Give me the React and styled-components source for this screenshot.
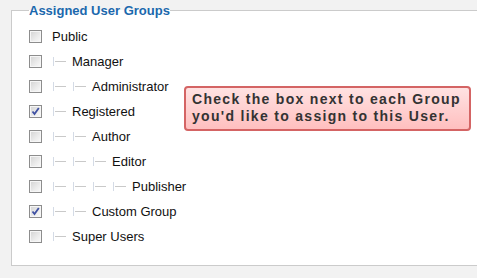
import styled, { createGlobalStyle } from "styled-components";

const Global = createGlobalStyle`
  html, body {
    margin: 0;
    padding: 0;
    overflow: hidden;
    background: #f2f2f2;
    font-family: "Liberation Sans", Arial, sans-serif;
  }
`;

const Page = styled.div`
  padding: 3px 0 0 11px;
  width: 480px;
`;

const Fieldset = styled.fieldset`
  margin: 0;
  padding: 6px 0 16px 17px;
  border: 1px solid #cbcbcb;
  background: #fff;
  min-width: 0;
`;

const Legend = styled.legend`
  padding: 0;
  font-size: 13px;
  line-height: 15px;
  font-weight: bold;
  color: #1b68ad;
`;

const Body = styled.div`
  position: relative;
`;

const List = styled.ul`
  list-style: none;
  margin: 0;
  padding: 0;
`;

const Row = styled.li`
  display: flex;
  align-items: center;
  height: 25px;
  font-size: 13px;
  color: #111;
`;

const Box = styled.span`
  width: 11px;
  height: 11px;
  border: 1px solid #8d8d8d;
  background: linear-gradient(135deg, #d3d3d3 0%, #ececec 60%, #fafafa 100%);
  box-shadow: inset 0 0 0 1px #f6f6f6;
  display: flex;
  align-items: center;
  justify-content: center;
  margin-right: 10px;
  flex: none;
`;

const Indent = styled.span`
  display: inline-block;
  width: 20px;
  height: 10px;
  flex: none;
  background:
    linear-gradient(#d4dbe6, #d4dbe6) 1px 0 / 1px 9px no-repeat,
    linear-gradient(#c9c9c9, #c9c9c9) 3px 4px / 11px 1px no-repeat;
`;

const Callout = styled.div`
  position: absolute;
  left: 155px;
  top: 62px;
  width: 271px;
  padding: 3px 6px 4px 6px;
  border: 2px solid #d46464;
  border-radius: 4px;
  background: linear-gradient(#ffe2e2, #ffbfbf);
  color: #333;
  font-size: 14px;
  font-weight: bold;
  letter-spacing: 1.3px;
  line-height: 17px;
`;

const Check = () => (
  <svg width="9" height="9" viewBox="0 0 9 9">
    <path d="M1.5 4.5 L3.5 7 L7.8 1" fill="none" stroke="#3f51a3" strokeWidth="1.8" />
  </svg>
);

const groups = [
  { name: "Public", level: 0 },
  { name: "Manager", level: 1 },
  { name: "Administrator", level: 2 },
  { name: "Registered", level: 1, checked: true },
  { name: "Author", level: 2 },
  { name: "Editor", level: 3 },
  { name: "Publisher", level: 4 },
  { name: "Custom Group", level: 2, checked: true },
  { name: "Super Users", level: 1 },
];

export default function App() {
  return (
    <Page>
      <Global />
      <Fieldset>
        <Legend>Assigned User Groups</Legend>
        <Body>
          <List>
            {groups.map((g) => (
              <Row key={g.name}>
                <Box>{g.checked && <Check />}</Box>
                {Array.from({ length: g.level }).map((_, i) => (
                  <Indent key={i} />
                ))}
                {g.name}
              </Row>
            ))}
          </List>
          <Callout>
            Check the box next to each Group you'd like to assign to this User.
          </Callout>
        </Body>
      </Fieldset>
    </Page>
  );
}
